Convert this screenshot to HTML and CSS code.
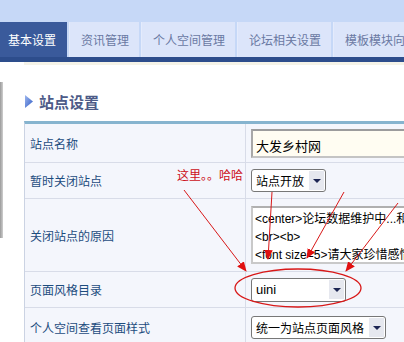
FILE: index.html
```html
<!DOCTYPE html>
<html lang="zh-CN">
<head>
  <meta charset="UTF-8" />
  <meta name="viewport" content="width=device-width, initial-scale=1.0"/>
  <title>站点设置</title>
  <link rel="stylesheet" href="styles.css">
</head>
<body>

  <div class="topband"></div>

  <nav class="tabs">
    <a class="tab active">基本设置</a>
    <a class="tab">资讯管理</a>
    <a class="tab">个人空间管理</a>
    <a class="tab">论坛相关设置</a>
    <a class="tab">模板模块向导</a>
  </nav>
  <div class="tabline"></div>

  <div class="page">
    <div class="frame-edge"></div>

    <div class="content">
      <h2 class="section-title">
        <svg class="bullet" width="8" height="13" viewBox="0 0 8 13">
          <defs>
            <linearGradient id="tri" x1="0" y1="0" x2="1" y2="1">
              <stop offset="0" stop-color="#9fb8ef"/>
              <stop offset="1" stop-color="#2f5bc4"/>
            </linearGradient>
          </defs>
          <polygon points="0,0 8,6.5 0,13" fill="url(#tri)"/>
        </svg>
        站点设置
      </h2>

      <div class="settings">
        <div class="row row-name">
          <div class="label">站点名称</div>
          <div class="field">
            <div class="textbox">大发乡村网</div>
          </div>
        </div>

        <div class="row row-close">
          <div class="label">暂时关闭站点 <span class="note">这里。。哈哈</span></div>
          <div class="field">
            <div class="select sel-open"><span>站点开放</span><i class="drop"></i></div>
          </div>
        </div>

        <div class="row row-reason">
          <div class="label">关闭站点的原因</div>
          <div class="field">
            <div class="textarea">
              <div>&lt;center&gt;论坛数据维护中...和</div>
              <div>&lt;br&gt;&lt;b&gt;</div>
              <div>&lt;font size=5&gt;请大家珍惜感情</div>
            </div>
          </div>
        </div>

        <div class="row row-style">
          <div class="label">页面风格目录</div>
          <div class="field">
            <div class="select sel-style"><span class="latin">uini</span><i class="drop"></i></div>
          </div>
        </div>

        <div class="row row-space">
          <div class="label">个人空间查看页面样式</div>
          <div class="field">
            <div class="select sel-space"><span>统一为站点页面风格</span><i class="drop"></i></div>
          </div>
        </div>
      </div>
    </div>
  </div>

  <!-- red hand-drawn notes on top of the screenshot -->
  <svg class="marks" width="404" height="342" viewBox="0 0 404 342">
    <defs>
      <marker id="head" markerUnits="userSpaceOnUse" markerWidth="10" markerHeight="10" refX="9" refY="5" orient="auto">
        <polygon points="0,0.8 10,5 0,9.2" fill="#e01010"/>
      </marker>
    </defs>
    <g stroke="#d81818" stroke-width="1" fill="none">
      <line x1="184" y1="190" x2="246" y2="271" marker-end="url(#head)"/>
      <line x1="272" y1="192" x2="268" y2="259" marker-end="url(#head)"/>
      <line x1="344" y1="192" x2="307" y2="258" marker-end="url(#head)"/>
      <line x1="398" y1="203" x2="346" y2="271" marker-end="url(#head)"/>
      <ellipse cx="298" cy="288" rx="63" ry="19" stroke-width="1.3"/>
    </g>
  </svg>

</body>
</html>
```

FILE: styles.css
```css
* {
  box-sizing: border-box;
}

body {
  margin: 0;
  width: 404px;
  height: 342px;
  overflow: hidden;
  position: relative;
  background: #fff;
  font-family: "Liberation Sans", "Noto Sans CJK SC", sans-serif;
  font-size: 12px;
  color: #000;
}

/* Tabs */
.topband {
  height: 22px;
  background: #c6d8f7;
}

.tabs {
  display: flex;
  gap: 2px;
  height: 35px;
  background: #c6d8f7;
  white-space: nowrap;
}

.tab {
  display: flex;
  align-items: center;
  flex-shrink: 0;
  padding: 0 10px 0 11px;
  background: #dce5fa;
  border-left: 1px solid #e4ebfc;
  color: #6a79a3;
  font-size: 12px;
}

.tab.active {
  padding: 0 11px 0 8px;
  background: #3a5a9b;
  border-left: none;
  color: #fff;
}

.tabline {
  height: 5px;
  background: #2d4d8c;
}

/* Page */
.page {
  display: flex;
}

.frame-edge {
  width: 3px;
  height: 156px;
  margin-top: 20px;
  background: linear-gradient(90deg, #9a9a9a, #cfcfcf);
}

.content {
  flex: 1;
  margin-left: 21px;
  border-top: 3px solid #f5f3e8;
  padding-top: 26px;
}

.section-title {
  display: flex;
  align-items: center;
  gap: 6px;
  margin: 0 0 10px 1px;
  height: 20px;
  font-size: 15px;
  font-weight: bold;
  color: #4d5b88;
}

/* Settings table */
.settings {
  width: 380px;
  border-top: 3px solid #86b4cf;
  border-left: 1px solid #cbd3e3;
  background: #f4f6fc;
}

.row {
  display: grid;
  grid-template-columns: 221px 1fr;
  border-bottom: 1px solid #d8dce8;
}

.row-name { height: 39px; }
.row-close { height: 36px; }
.row-reason { height: 73px; }
.row-style { height: 36px; }
.row-space { height: 40px; }

.label {
  display: flex;
  align-items: center;
  justify-content: space-between;
  padding: 0 2px 0 5px;
  border-right: 1px solid #d8dce8;
  color: #1d4c7e;
}

.note {
  font-family: "Noto Sans CJK SC", sans-serif;
  color: #cc1020;
  margin-top: -12px;
}

.field {
  display: flex;
  align-items: center;
  padding-left: 5px;
  overflow: hidden;
}

.textbox {
  width: 200px;
  height: 29px;
  flex-shrink: 0;
  padding: 5px 0 0 3px;
  border: 2px solid #c4c4c4;
  border-top-color: #9c9c9c;
  border-left-color: #a8a8a8;
  background: #fffdf2;
  font-size: 13px;
}

.textarea {
  width: 200px;
  height: 58px;
  flex-shrink: 0;
  padding: 2px 0 0 2px;
  border: 2px solid #c9c9c9;
  border-top-color: #b0b0b0;
  background: #fff;
  line-height: 18px;
  white-space: nowrap;
  overflow: hidden;
}

.select {
  display: flex;
  align-items: center;
  justify-content: space-between;
  height: 23px;
  padding: 0 1px 0 4px;
  border: 1px solid #777;
  border-radius: 3px;
  background: #fff;
}

.sel-open { width: 75px; }
.sel-style { width: 95px; height: 24px; }
.sel-space { width: 135px; }

.latin {
  font-size: 13px;
}

.drop {
  position: relative;
  width: 15px;
  height: 19px;
  background: #e6e8ef;
}

.drop::after {
  content: "";
  position: absolute;
  left: 4px;
  top: 8px;
  border-left: 4px solid transparent;
  border-right: 4px solid transparent;
  border-top: 4px solid #1c2553;
}

/* Annotations */
.marks {
  position: absolute;
  top: 0;
  left: 0;
  pointer-events: none;
}
```
